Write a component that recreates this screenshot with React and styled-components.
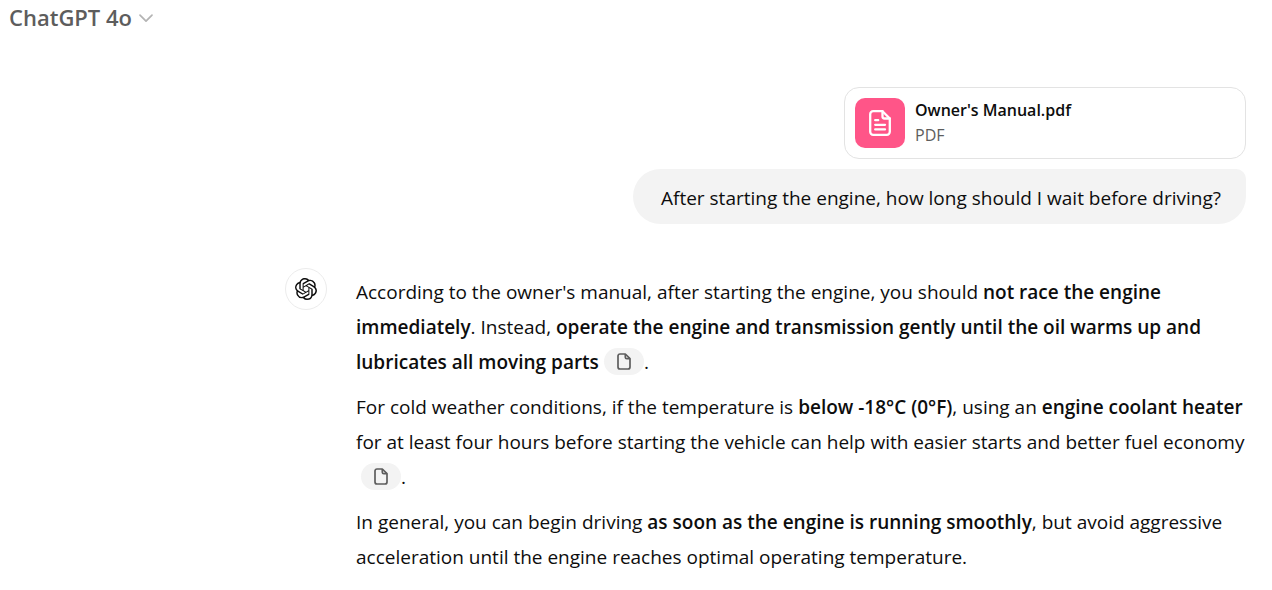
import React from "react";
import styled, { createGlobalStyle } from "styled-components";
import { SiOpenai } from "react-icons/si";

const GlobalStyle = createGlobalStyle`
  *, *::before, *::after { box-sizing: border-box; }
  body {
    margin: 0;
    background: #fff;
    color: #0d0d0d;
    font-family: "Segoe UI", "Open Sans", "Noto Sans", sans-serif;
    font-size: 19px;
    line-height: 35px;
  }
`;

const Header = styled.header`
  display: flex;
  padding: 0 8px;
`;

const ModelButton = styled.button`
  display: flex;
  align-items: center;
  gap: 6px;
  padding: 0 1px;
  border: 0;
  background: transparent;
  color: #5d5d5d;
  font: inherit;
  font-size: 22px;
  font-weight: 600;
  line-height: 35px;
  cursor: pointer;
`;

const Thread = styled.main`
  display: flex;
  flex-direction: column;
  gap: 44px;
  width: 100%;
  max-width: 1013px;
  margin-left: auto;
  padding: 52px 26px 16px;
`;

const UserTurn = styled.section`
  display: flex;
  flex-direction: column;
  align-items: flex-end;
  gap: 10px;
`;

const FileCard = styled.a`
  display: flex;
  align-items: center;
  gap: 10px;
  width: 100%;
  max-width: 402px;
  padding: 10px;
  border: 1px solid #e3e3e3;
  border-radius: 15px;
  color: inherit;
  text-decoration: none;
`;

const FileTile = styled.span`
  display: grid;
  place-items: center;
  width: 50px;
  height: 50px;
  border-radius: 10px;
  background: #ff5588;
  color: #fff;
`;

const FileText = styled.span`
  display: flex;
  flex-direction: column;
  font-size: 16px;
  line-height: 25px;
`;

const FileName = styled.span`
  font-weight: 600;
`;

const FileType = styled.span`
  color: #5d5d5d;
`;

const Bubble = styled.div`
  padding: 12px 25px 8px 28px;
  border-radius: 28px 10px 28px 28px;
  background: #f3f3f3;
`;

const ReplyTurn = styled.section`
  display: flex;
  gap: 29px;
`;

const Avatar = styled.div`
  display: grid;
  flex: none;
  place-items: center;
  width: 42px;
  height: 42px;
  border: 1px solid #ececec;
  border-radius: 50%;
`;

const Reply = styled.div`
  display: flex;
  flex: 1;
  flex-direction: column;
  gap: 10px;
  min-width: 0;
  padding-top: 7px;
`;

const Paragraph = styled.p`
  margin: 0;

  strong { font-weight: 600; }
`;

const Cite = styled.button`
  display: inline-flex;
  align-items: center;
  justify-content: center;
  width: 40px;
  height: 27px;
  margin: 0 0 0 5px;
  padding: 0;
  border: 0;
  border-radius: 14px;
  background: #f3f3f3;
  color: #5d5d5d;
  vertical-align: -1px;
  cursor: pointer;
`;

function Citation() {
  return (
    <Cite type="button" aria-label="View source">
      <svg width="14" height="17" viewBox="0 0 14 17" fill="none" stroke="currentColor" strokeWidth="1.7" strokeLinejoin="round" aria-hidden="true">
        <path d="M8.3 1H3a2 2 0 0 0-2 2v11a2 2 0 0 0 2 2h8a2 2 0 0 0 2-2V5.7z" />
        <path d="M8.3 1v3.2a1.5 1.5 0 0 0 1.5 1.5H13" />
      </svg>
    </Cite>
  );
}

export default function App() {
  return (
    <>
      <GlobalStyle />
      <Header>
        <ModelButton type="button">
          ChatGPT 4o
          <svg width="16" height="16" viewBox="0 0 16 16" fill="none" stroke="#b4b4b4" strokeWidth="1.7" strokeLinecap="round" strokeLinejoin="round" aria-hidden="true">
            <path d="M2 5.2 8 11.2 14 5.2" />
          </svg>
        </ModelButton>
      </Header>
      <Thread>
        <UserTurn>
          <FileCard href="#manual">
            <FileTile>
              <svg width="22" height="26" viewBox="0 0 22 26" fill="none" stroke="currentColor" strokeWidth="2.3" strokeLinecap="round" strokeLinejoin="round" aria-hidden="true">
                <path d="M13.5 1.2H4.2a3 3 0 0 0-3 3v17.6a3 3 0 0 0 3 3h13.6a3 3 0 0 0 3-3V8.5z" />
                <path d="M13.5 1.2v5.3a2 2 0 0 0 2 2h5.3M6.2 10.2h3M6.2 14.8h9.8M6.2 19.4h9.8" />
              </svg>
            </FileTile>
            <FileText>
              <FileName>Owner's Manual.pdf</FileName>
              <FileType>PDF</FileType>
            </FileText>
          </FileCard>
          <Bubble>After starting the engine, how long should I wait before driving?</Bubble>
        </UserTurn>
        <ReplyTurn>
          <Avatar>
            <SiOpenai size={22} aria-hidden="true" />
          </Avatar>
          <Reply>
            <Paragraph>
              According to the owner's manual, after starting the engine, you should <strong>not race the engine
              immediately</strong>. Instead, <strong>operate the engine and transmission gently until the oil warms up and
              lubricates all moving parts</strong><Citation />.
            </Paragraph>
            <Paragraph>
              For cold weather conditions, if the temperature is <strong>below -18°C (0°F)</strong>, using an{" "}
              <strong>engine coolant heater</strong> for at least four hours before starting the vehicle can help with
              easier starts and better fuel economy<Citation />.
            </Paragraph>
            <Paragraph>
              In general, you can begin driving <strong>as soon as the engine is running smoothly</strong>, but avoid
              aggressive acceleration until the engine reaches optimal operating temperature.
            </Paragraph>
          </Reply>
        </ReplyTurn>
      </Thread>
    </>
  );
}
